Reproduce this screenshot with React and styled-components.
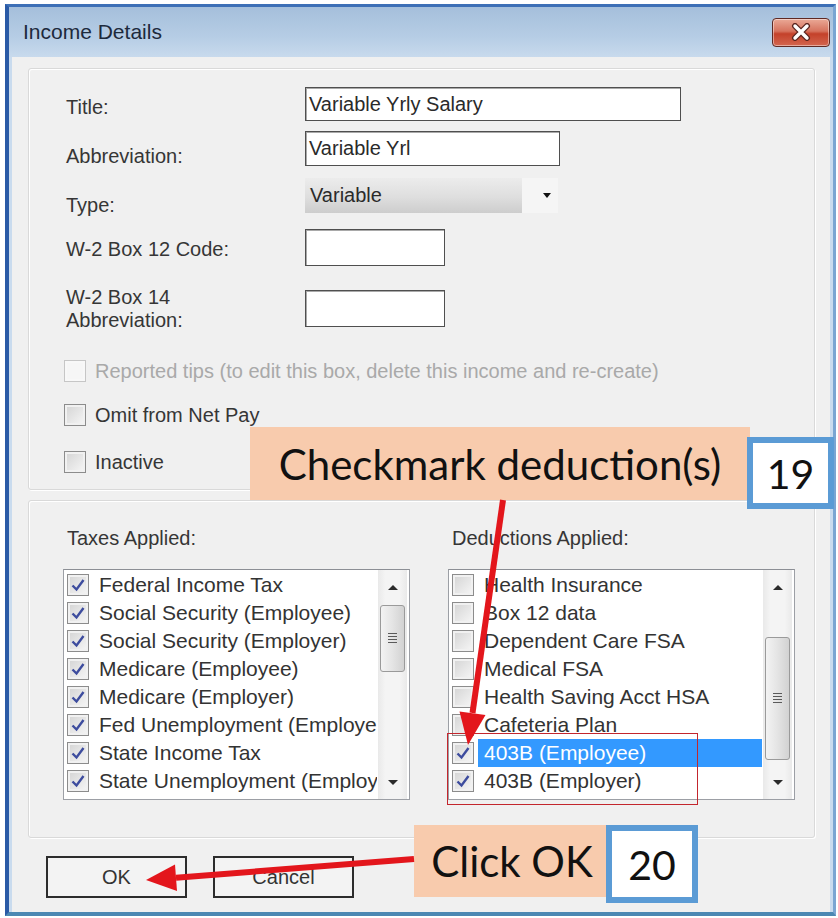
import React from 'react';
import styled, { createGlobalStyle } from 'styled-components';

const GlobalStyle = createGlobalStyle`
  html, body { margin: 0; padding: 0; background: #ffffff; }
  * { box-sizing: border-box; }
`;

const Screen = styled.div`
  position: relative;
  width: 838px;
  height: 918px;
  padding: 4px 2px 2px 5px;
  font-family: "Liberation Sans", Arial, sans-serif;
  color: #2e2e2e;
  overflow: hidden;
`;

const Window = styled.div`
  height: 100%;
  display: flex;
  flex-direction: column;
  border-style: solid;
  border-width: 3px 3px 4px 4px;
  border-color: #3d6fb6 #7aa5d2 #4c88b3 #2a5aa6;
  background: #c9dbee;
`;

const TitleBar = styled.div`
  flex: none;
  height: 50px;
  display: flex;
  align-items: center;
  justify-content: space-between;
  padding: 0 3px 0 14px;
  background: linear-gradient(#a5bfdb, #b6cde5 60%, #c8daed);
`;

const Caption = styled.span`
  font-size: 21px;
  color: #1d2a3c;
`;

const CloseButton = styled.div`
  width: 58px;
  height: 29px;
  border: 1px solid #5f2a24;
  border-radius: 4px;
  background: linear-gradient(#eaa997, #d6735e 45%, #c4412a 55%, #d3664f);
  box-shadow: inset 0 0 0 1px rgba(255, 255, 255, 0.45);
  display: flex;
  align-items: center;
  justify-content: center;
`;

const Client = styled.div`
  flex: 1;
  margin: 0 3px;
  padding: 11px 15px 0 16px;
  background: #f0f0f0;
  display: flex;
  flex-direction: column;
`;

const Group = styled.div`
  flex: none;
  height: ${p => p.$h}px;
  margin-top: ${p => p.$gap || 0}px;
  padding: ${p => p.$pad};
  border: 1px solid #d9d9d9;
  border-radius: 3px;
  box-shadow: inset 1px 1px 0 #ffffff, 1px 1px 0 #ffffff;
`;

const FieldRow = styled.div`
  display: flex;
  align-items: center;
  height: ${p => p.$h}px;
  margin-top: ${p => p.$gap || 0}px;
`;

const FieldLabel = styled.div`
  flex: none;
  width: 239px;
  padding-top: ${p => p.$drop || 0}px;
  font-size: 20px;
  line-height: 23px;
  color: #363636;
`;

const TextBox = styled.div`
  width: ${p => p.$w}px;
  height: 100%;
  display: flex;
  align-items: center;
  padding-left: 3px;
  background: #ffffff;
  border: 1px solid #4f4f4f;
  box-shadow: inset 1px 1px 0 #a9a9a9;
  font-size: 20px;
  color: #2a2a2a;
`;

const Select = styled.div`
  width: 253px;
  height: 100%;
  display: flex;
  background: #f5f5f5;
`;

const SelectValue = styled.div`
  flex: 0 0 217px;
  display: flex;
  align-items: center;
  padding-left: 5px;
  font-size: 20px;
  color: #2a2a2a;
  background: linear-gradient(#ececec, #dedede 55%, #cdcdcd);
`;

const SelectArrow = styled.div`
  flex: 1;
  display: flex;
  align-items: center;
  justify-content: center;
  padding-left: 14px;
  &::after {
    content: "";
    border-left: 4px solid transparent;
    border-right: 4px solid transparent;
    border-top: 5px solid #111;
  }
`;

const OptionRow = styled.label`
  display: flex;
  align-items: center;
  gap: 9px;
  height: 22px;
  margin-left: -2px;
  margin-top: ${p => p.$gap}px;
  font-size: 20px;
  color: ${p => (p.$disabled ? '#a9a9a9' : '#363636')};
`;

const Box = styled.span`
  flex: none;
  width: 22px;
  height: 22px;
  display: flex;
  align-items: center;
  justify-content: center;
  border: 1px solid ${p => (p.$disabled ? '#c6c6c6' : '#8c8c8c')};
  background: ${p =>
    p.$disabled ? '#f6f6f6' : 'linear-gradient(135deg, #d3d3d3, #f7f7f7)'};
  box-shadow: inset 0 0 0 2px ${p => (p.$disabled ? '#f8f8f8' : '#f1f1f1')};
`;

const Columns = styled.div`
  display: grid;
  grid-template-columns: 347px 347px;
  column-gap: 38px;
`;

const ListTitle = styled.div`
  height: 22px;
  padding-left: 4px;
  margin-bottom: 20px;
  font-size: 20px;
  line-height: 22px;
  color: #363636;
`;

const ListBox = styled.div`
  height: 231px;
  display: flex;
  background: #ffffff;
  border: 1px solid #9c9fa5;
  border-top-color: #8c8f95;
`;

const Items = styled.div`
  flex: 1;
  min-width: 0;
  overflow: hidden;
  padding: 1px 0 0 3px;
`;

const Item = styled.div`
  display: flex;
  align-items: center;
  height: 28px;
  white-space: nowrap;
  font-size: 21px;
  color: #333;
`;

const ItemText = styled.span`
  flex: 1;
  height: 100%;
  display: flex;
  align-items: center;
  margin-left: 4px;
  padding-left: 6px;
  background: ${p => (p.$selected ? '#3399ff' : 'transparent')};
  color: ${p => (p.$selected ? '#ffffff' : 'inherit')};
`;

const ScrollBar = styled.div`
  flex: none;
  width: 29px;
  margin: 0 2px 0 1px;
  display: flex;
  flex-direction: column;
  background: linear-gradient(90deg, #e9e9e9, #f4f4f4 25%, #f4f4f4 75%, #e9e9e9);
`;

const ScrollArrow = styled.div`
  flex: none;
  height: 34px;
  display: flex;
  align-items: center;
  justify-content: center;
  &::after {
    content: "";
    border-left: 5px solid transparent;
    border-right: 5px solid transparent;
    ${p => (p.$up ? 'border-bottom' : 'border-top')}: 5px solid #2b2b2b;
  }
`;

const Gutter = styled.div`
  flex: 1;
  padding-top: ${p => p.$offset}px;
`;

const Thumb = styled.div`
  height: ${p => p.$h}px;
  margin: 0 2px;
  border: 1px solid #9a9a9a;
  border-radius: 3px;
  background: linear-gradient(90deg, #f3f3f3, #e4e4e4 50%, #d2d2d2);
  display: flex;
  align-items: center;
  justify-content: center;
`;

const Grip = styled.div`
  width: 9px;
  height: 11px;
  background: repeating-linear-gradient(#5a5a5a 0 1px, transparent 1px 3px);
`;

const ButtonRow = styled.div`
  display: flex;
  gap: 26px;
  margin-top: 18px;
  padding-left: 18px;
`;

const Button = styled.div`
  width: 141px;
  height: 42px;
  display: flex;
  align-items: center;
  justify-content: center;
  border: 2px solid #2c2c2c;
  background: #f3f3f3;
  font-size: 20px;
  color: #333;
`;

const Callout = styled.div`
  position: absolute;
  left: ${p => p.$x}px;
  top: ${p => p.$y}px;
  width: ${p => p.$w}px;
  height: ${p => p.$h}px;
  display: flex;
  align-items: center;
  justify-content: center;
  background: #f8cbad;
  font-family: Lato, "Open Sans", sans-serif;
  font-size: 42px;
  color: #111;
`;

const StepBadge = styled.div`
  position: absolute;
  left: ${p => p.$x}px;
  top: ${p => p.$y}px;
  width: ${p => p.$w}px;
  height: ${p => p.$h}px;
  display: flex;
  align-items: center;
  justify-content: center;
  background: #ffffff;
  border: 6px solid #5b9bd5;
  font-family: Lato, "Open Sans", sans-serif;
  font-size: 41px;
  color: #111;
`;

const Highlight = styled.div`
  position: absolute;
  left: 447px;
  top: 733px;
  width: 251px;
  height: 72px;
  border: 1.5px solid #c3262d;
`;

const Arrows = styled.svg`
  position: absolute;
  left: 0;
  top: 0;
  pointer-events: none;
`;

const taxes = [
  'Federal Income Tax',
  'Social Security (Employee)',
  'Social Security (Employer)',
  'Medicare (Employee)',
  'Medicare (Employer)',
  'Fed Unemployment (Employee)',
  'State Income Tax',
  'State Unemployment (Employer)',
];

const deductions = [
  { name: 'Health Insurance' },
  { name: 'Box 12 data' },
  { name: 'Dependent Care FSA' },
  { name: 'Medical FSA' },
  { name: 'Health Saving Acct HSA' },
  { name: 'Cafeteria Plan' },
  { name: '403B (Employee)', checked: true, selected: true },
  { name: '403B (Employer)', checked: true },
];

function Check({ checked, disabled }) {
  return (
    <Box $disabled={disabled}>
      {checked && (
        <svg width="18" height="18" viewBox="0 0 18 18">
          <path d="M3.5 9.5 L7.5 13.5 L14.5 4" fill="none" stroke="#3d4c9e" strokeWidth="2.4" />
        </svg>
      )}
    </Box>
  );
}

function CheckList({ rows, thumbTop, thumbHeight }) {
  return (
    <ListBox>
      <Items>
        {rows.map(r => (
          <Item key={r.name}>
            <Check checked={r.checked} />
            <ItemText $selected={r.selected}>{r.name}</ItemText>
          </Item>
        ))}
      </Items>
      <ScrollBar>
        <ScrollArrow $up />
        <Gutter $offset={thumbTop}>
          <Thumb $h={thumbHeight}>
            <Grip />
          </Thumb>
        </Gutter>
        <ScrollArrow />
      </ScrollBar>
    </ListBox>
  );
}

export default function App() {
  return (
    <>
      <GlobalStyle />
      <Screen>
        <Window>
          <TitleBar>
            <Caption>Income Details</Caption>
            <CloseButton>
              <svg width="22" height="18" viewBox="0 0 22 18">
                <path d="M5 3 L17 15 M17 3 L5 15" stroke="#5a2620" strokeWidth="6" strokeLinecap="round" />
                <path d="M5 3 L17 15 M17 3 L5 15" stroke="#ffffff" strokeWidth="3.4" strokeLinecap="round" />
              </svg>
            </CloseButton>
          </TitleBar>

          <Client>
            <Group $h={422} $pad="18px 0 0 37px">
              <FieldRow $h={34}>
                <FieldLabel $drop={6}>Title:</FieldLabel>
                <TextBox $w={376}>Variable Yrly Salary</TextBox>
              </FieldRow>
              <FieldRow $h={35} $gap={10}>
                <FieldLabel $drop={15}>Abbreviation:</FieldLabel>
                <TextBox $w={255}>Variable Yrl</TextBox>
              </FieldRow>
              <FieldRow $h={35} $gap={12}>
                <FieldLabel $drop={19}>Type:</FieldLabel>
                <Select>
                  <SelectValue>Variable</SelectValue>
                  <SelectArrow />
                </Select>
              </FieldRow>
              <FieldRow $h={37} $gap={16}>
                <FieldLabel $drop={3}>W-2 Box 12 Code:</FieldLabel>
                <TextBox $w={140} />
              </FieldRow>
              <FieldRow $h={37} $gap={24}>
                <FieldLabel>
                  W-2 Box 14
                  <br />
                  Abbreviation:
                </FieldLabel>
                <TextBox $w={140} />
              </FieldRow>

              <OptionRow $gap={33} $disabled>
                <Check disabled />
                Reported tips (to edit this box, delete this income and re-create)
              </OptionRow>
              <OptionRow $gap={22}>
                <Check />
                Omit from Net Pay
              </OptionRow>
              <OptionRow $gap={25}>
                <Check />
                Inactive
              </OptionRow>
            </Group>

            <Group $h={338} $gap={10} $pad="26px 0 0 34px">
              <Columns>
                <div>
                  <ListTitle>Taxes Applied:</ListTitle>
                  <CheckList
                    rows={taxes.map(name => ({ name, checked: true }))}
                    thumbTop={1}
                    thumbHeight={67}
                  />
                </div>
                <div>
                  <ListTitle>Deductions Applied:</ListTitle>
                  <CheckList rows={deductions} thumbTop={33} thumbHeight={123} />
                </div>
              </Columns>
            </Group>

            <ButtonRow>
              <Button>OK</Button>
              <Button>Cancel</Button>
            </ButtonRow>
          </Client>
        </Window>

        <Highlight />
        <Callout $x={250} $y={427} $w={500} $h={73}>Checkmark deduction(s)</Callout>
        <StepBadge $x={747} $y={437} $w={87} $h={72}>19</StepBadge>
        <Callout $x={414} $y={825} $w={196} $h={72}>Click OK</Callout>
        <StepBadge $x={606} $y={825} $w={92} $h={78}>20</StepBadge>

        <Arrows width="838" height="918" viewBox="0 0 838 918">
          <line x1="503" y1="500" x2="472.5" y2="713" stroke="#e3161c" strokeWidth="6" />
          <polygon points="468,745 485.5,715 459.5,711.5" fill="#e3161c" />
          <line x1="414" y1="859" x2="176" y2="877.7" stroke="#e3161c" strokeWidth="6" />
          <polygon points="146,880 177,891 175,864.5" fill="#e3161c" />
        </Arrows>
      </Screen>
    </>
  );
}
